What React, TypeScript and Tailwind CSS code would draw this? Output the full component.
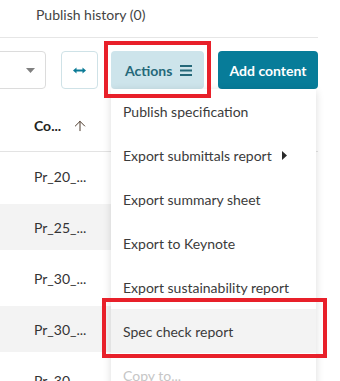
import { ArrowUp } from 'lucide-react';

const rows = [
  { id: 'Pr_20_...', shaded: false },
  { id: 'Pr_25_...', shaded: true },
  { id: 'Pr_30_...', shaded: false },
  { id: 'Pr_30_...', shaded: true },
  { id: 'Pr_30_...', shaded: false },
];

const menuItems = [
  { label: 'Publish specification' },
  { label: 'Export submittals report', sub: true },
  { label: 'Export summary sheet' },
  { label: 'Export to Keynote' },
  { label: 'Export sustainability report' },
  { label: 'Spec check report', active: true },
  { label: 'Copy to...', disabled: true },
];

export default function App() {
  return (
    <div className="relative w-[340px] h-[381px] overflow-hidden bg-white font-['Lato',sans-serif] text-[14px] text-[#333]">
      <div className="w-[318px]">
        {/* Tabs */}
        <div className="h-[38px] border-b border-[#e6e6e6] pl-[36px] pt-[5px] leading-[20px] text-[#444]">
          Publish history (0)
        </div>

        {/* Toolbar */}
        <div className="flex items-start pt-[13px]">
          <div className="-ml-[14px] w-[60px] h-[38px] border border-[#dcdcdc] rounded-[4px] flex items-center justify-end pr-[10px]">
            <svg width="9" height="5" viewBox="0 0 9 5">
              <polygon points="0,0 9,0 4.5,5" fill="#808080" />
            </svg>
          </div>
          <button className="ml-[15px] w-[37px] h-[38px] border border-[#cfe2e7] rounded-[4px] flex items-center justify-center">
            <svg width="13" height="7" viewBox="0 0 13 7">
              <line x1="2" y1="3.5" x2="11" y2="3.5" stroke="#0b7a96" strokeWidth="2" />
              <polygon points="0,3.5 3.5,0.5 3.5,6.5" fill="#0b7a96" />
              <polygon points="13,3.5 9.5,0.5 9.5,6.5" fill="#0b7a96" />
            </svg>
          </button>
          <div className="relative ml-[13px] w-[93px]">
            <button className="w-[93px] h-[38px] rounded-[4px] bg-[#cde4eb] flex items-center pl-[14px] gap-[8px] font-bold text-[#256879]">
              <span>Actions</span>
              <svg width="12" height="11" viewBox="0 0 12 11">
                <rect x="0" y="0" width="12" height="2" fill="#256879" />
                <rect x="0" y="4.5" width="12" height="2" fill="#256879" />
                <rect x="0" y="9" width="12" height="2" fill="#256879" />
              </svg>
            </button>
            <div className="absolute left-0 top-[38px] z-10 w-[205px] bg-white shadow-[0_2px_8px_rgba(0,0,0,0.14)]">
              {menuItems.map(item => (
                <div
                  key={item.label}
                  className={
                    'h-[44px] flex items-center px-[12px] ' +
                    (item.active ? 'bg-[#f3f3f3] ' : '') +
                    (item.disabled ? 'text-[#c6c6c6]' : 'text-[#3b3b3b]')
                  }
                >
                  <span>{item.label}</span>
                  {item.sub && (
                    <svg className="ml-[10px]" width="5" height="9" viewBox="0 0 5 9">
                      <polygon points="0,0 5,4.5 0,9" fill="#2a2a2a" />
                    </svg>
                  )}
                </div>
              ))}
            </div>
          </div>
          <button className="ml-[14px] w-[100px] h-[38px] rounded-[4px] bg-[#077c99] text-white font-bold">
            Add content
          </button>
        </div>

        {/* Table */}
        <div className="w-[318px]">
          <div className="h-[63px] border-b border-[#e3e3e3] flex items-start pt-[27px] pl-[34px]">
            <span className="font-bold text-[#222] leading-[20px]">Co...</span>
            <ArrowUp size={16} strokeWidth={1.5} className="ml-[11px] mt-[2px] text-[#4e3c2e]" />
          </div>
          {rows.map((r, i) => (
            <div key={i} className="h-[51px] pt-[1px] w-[316px]">
              <div className={'h-[46px] flex items-center pl-[34px] ' + (r.shaded ? 'bg-[#f3f3f3]' : '')}>
                {r.id}
              </div>
            </div>
          ))}
        </div>
      </div>

      {/* Annotation boxes */}
      <div className="absolute z-20 left-[104px] top-[41px] w-[107px] h-[57px] border-4 border-[#e8202a]" />
      <div className="absolute z-20 left-[102px] top-[298px] w-[225px] h-[60px] border-4 border-[#e8202a]" />
    </div>
  );
}
